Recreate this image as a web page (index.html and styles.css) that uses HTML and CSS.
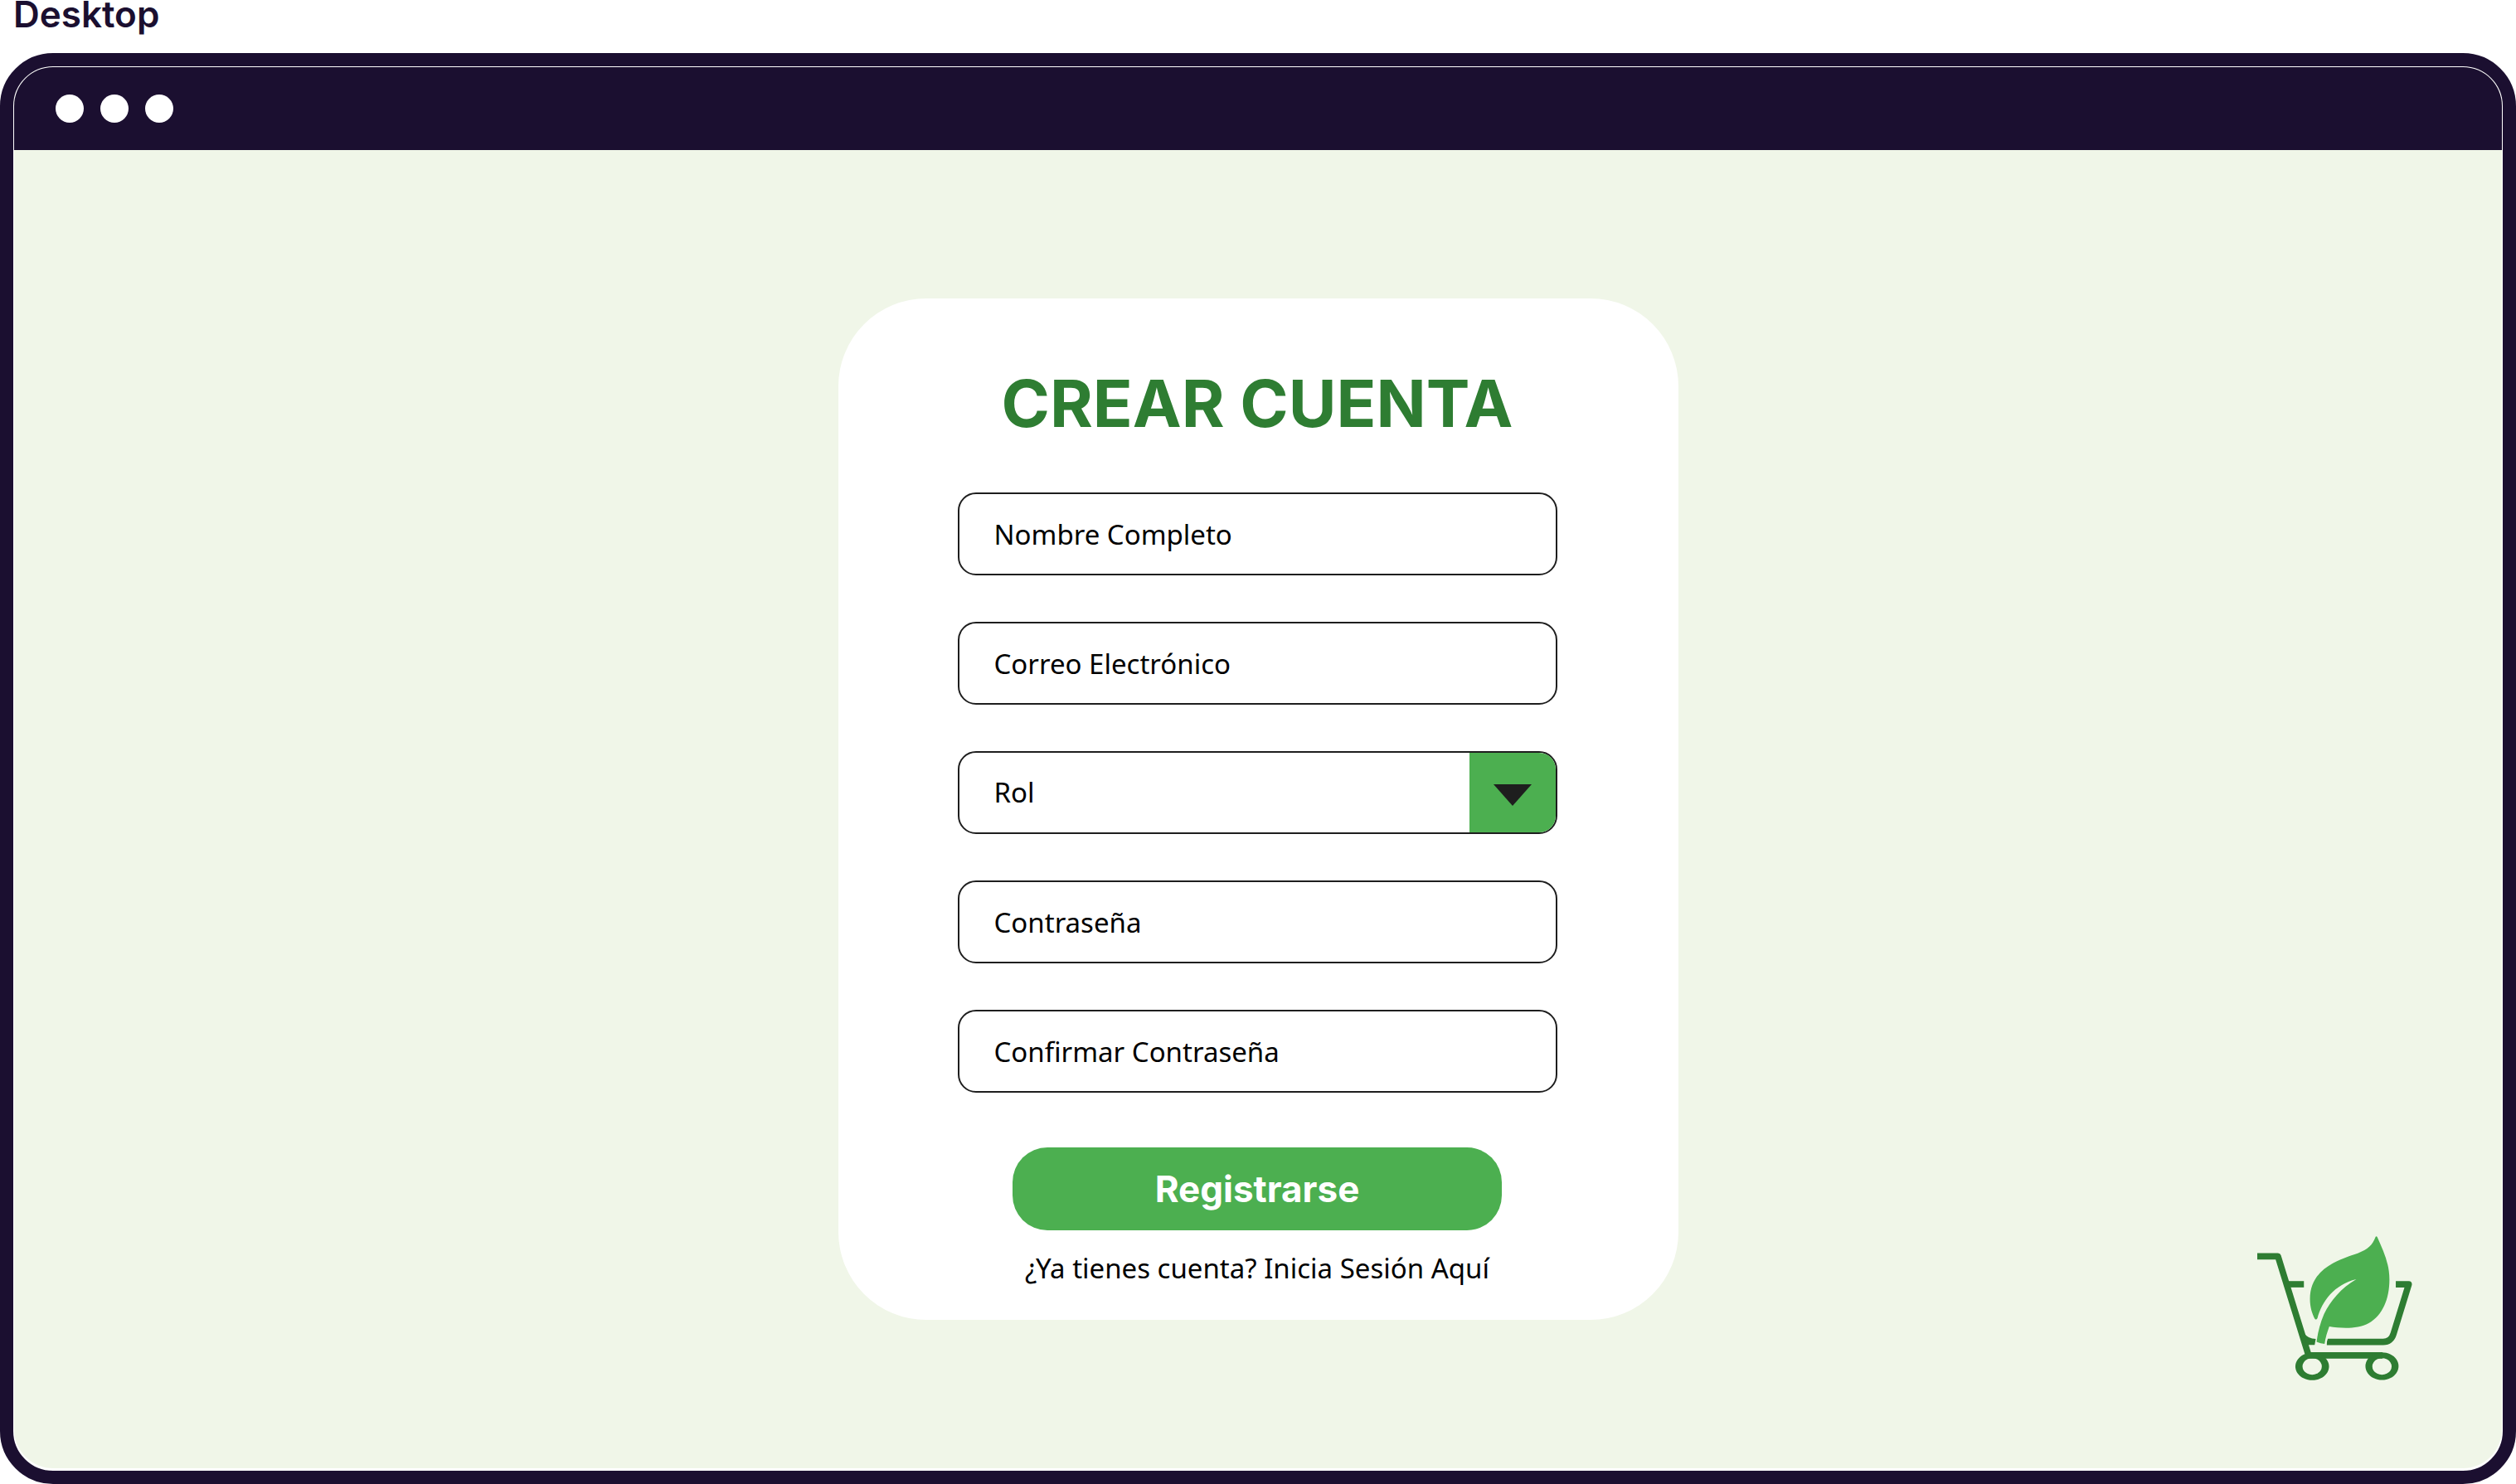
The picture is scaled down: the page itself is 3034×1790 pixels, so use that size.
FILE: index.html
```html
<!DOCTYPE html>
<html lang="es">
<head>
<meta charset="utf-8">
<meta name="viewport" content="width=device-width, initial-scale=1">
<title>Crear cuenta</title>
<link rel="stylesheet" href="styles.css">
</head>
<body>
<div class="frame-label">Desktop</div>
<div class="frame">
  <div class="screen">
    <div class="titlebar">
      <span class="dot"></span><span class="dot"></span><span class="dot"></span>
    </div>
    <main class="content">
      <form class="card">
        <h1 class="title">CREAR CUENTA</h1>
        <div class="fields">
          <input class="field" type="text" placeholder="Nombre Completo" aria-label="Nombre Completo">
          <input class="field" type="email" placeholder="Correo Electrónico" aria-label="Correo Electrónico">
          <div class="select">
            <select class="field" aria-label="Rol"><option>Rol</option></select>
            <span class="select-arrow">
              <svg width="46" height="26" viewBox="0 0 46 26" aria-hidden="true"><path d="M0 0H46L23 26Z" fill="#1e1e1e"/></svg>
            </span>
          </div>
          <input class="field" type="password" placeholder="Contraseña" aria-label="Contraseña">
          <input class="field" type="password" placeholder="Confirmar Contraseña" aria-label="Confirmar Contraseña">
        </div>
        <button class="submit" type="submit">Registrarse</button>
        <a class="login" href="#">¿Ya tienes cuenta? Inicia Sesión Aquí</a>
      </form>
      <svg class="logo" viewBox="66 63 562 522" role="img" aria-label="Carrito con hoja">
        <g fill="none" stroke="#2e7d32" stroke-width="23">
          <path d="M66 136H141L251 492" stroke-linejoin="round"/>
          <path d="M178 237H235"/>
          <path d="M568 237H615L560 416Q551 446 522 446H318" stroke-linejoin="round"/>
          <path d="M250 495H520"/>
        </g>
        <g fill="#2e7d32">
          <path d="M236 415Q250 435 278 435L274 457H245Z"/>
          <path fill-rule="evenodd" d="M265 485a61 50 0 1 0 .1 0ZM265 505a35 30 0 1 1-.1 0Z"/>
          <path fill-rule="evenodd" d="M518 484a60 50 0 1 0 .1 0ZM518 505a35 30 0 1 1-.1 0Z"/>
        </g>
        <path d="M323 430L314 460H300V430Z" fill="#f0f6e8"/>
        <path d="M495 65C482 97 468 110 430 125C370 146 257 176 257 290C257 320 265 345 275 363Q280 368 284 360C300 300 345 238 425 219C370 250 330 300 308 345C293 380 285 415 281 446Q295 453 310 453C313 430 320 410 327 390C370 397 430 400 470 378C520 350 545 290 545 220C545 160 522 115 501 66Q498 61 495 65Z" fill="#4caf50"/>
      </svg>
    </main>
  </div>
</div>
</body>
</html>
```
FILE: styles.css
```css
* {
  box-sizing: border-box;
}

body {
  margin: 0;
  min-height: 100vh;
  display: flex;
  flex-direction: column;
  background: #fff;
  color: #000;
  font-family: "Noto Sans", "Open Sans", sans-serif;
}

.frame-label {
  height: 64px;
  padding-left: 16px;
  color: #1b0f30;
  font: 600 44px/34px Inter, sans-serif;
}

.frame {
  flex: 1;
  display: flex;
  border: 16px solid #1b0f30;
  border-radius: 64px;
  padding: 1px 1px 3px;
}

.screen {
  flex: 1;
  display: flex;
  flex-direction: column;
  overflow: hidden;
  border-radius: 47px;
  background: #f0f6e8;
}

.titlebar {
  display: flex;
  align-items: center;
  gap: 20px;
  height: 100px;
  padding-left: 50px;
  background: #1b0f30;
}

.dot {
  width: 34px;
  height: 34px;
  border-radius: 50%;
  background: #fff;
}

.content {
  flex: 1;
  display: grid;
  grid-template-columns: 1fr minmax(0, 1013px) 1fr;
  align-items: center;
}

.card {
  grid-column: 2;
  display: flex;
  flex-direction: column;
  align-items: center;
  padding: 76px 146px 38px 144px;
  border-radius: 106px;
  background: #fff;
}

.title {
  margin: 0 0 58px;
  color: #2e7d32;
  font: 700 79px/100px Inter, sans-serif;
  white-space: nowrap;
}

.fields {
  width: 100%;
  display: grid;
  gap: 56px;
}

.field {
  width: 100%;
  height: 100px;
  padding: 0 42px;
  border: 2px solid #1e1e1e;
  border-radius: 22px;
  background: #fff;
  color: #000;
  font: 400 33px/48px "Noto Sans", "Open Sans", sans-serif;
  appearance: none;
}

.field::placeholder {
  color: #000;
  opacity: 1;
}

.select {
  display: grid;
}

.select > * {
  grid-area: 1 / 1;
}

.select-arrow {
  justify-self: end;
  display: grid;
  place-items: center;
  width: 104px;
  margin: 2px;
  padding-top: 6px;
  border-radius: 0 20px 20px 0;
  background: #4caf50;
  pointer-events: none;
}

.submit {
  width: 590px;
  height: 100px;
  margin-top: 66px;
  border: 0;
  border-radius: 42px;
  background: #4caf50;
  color: #fff;
  font: 700 44px/48px Inter, sans-serif;
}

.login {
  margin-top: 22px;
  color: #000;
  font-size: 33px;
  line-height: 48px;
  text-decoration: none;
}

.logo {
  grid-column: 3;
  align-self: end;
  justify-self: end;
  width: 187px;
  height: 174px;
  margin: 0 108px 106px 0;
}
```
